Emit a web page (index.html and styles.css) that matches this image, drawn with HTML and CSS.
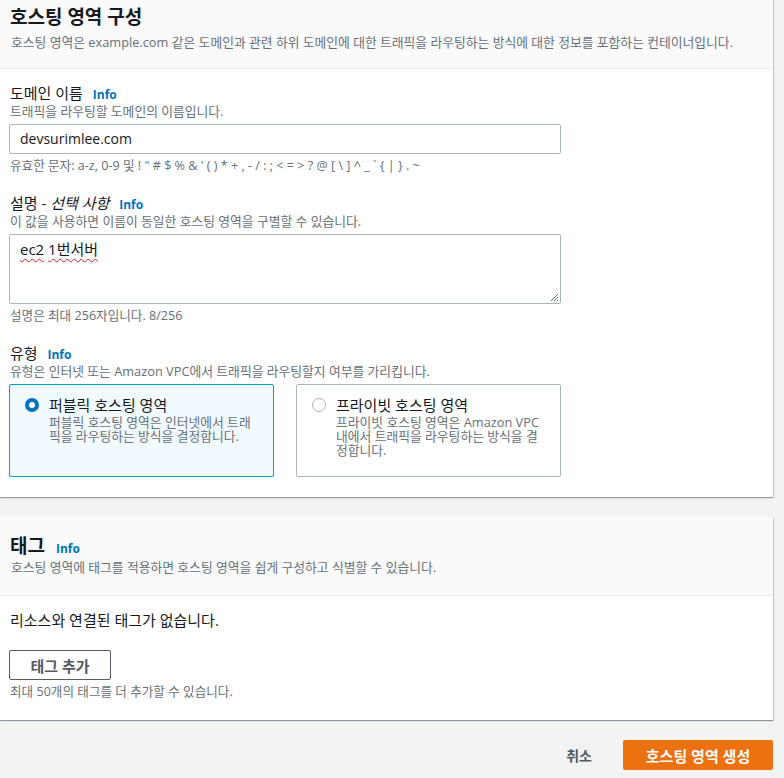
FILE: index.html
```html
<!DOCTYPE html>
<html>
<head>
<meta name="viewport" content="width=device-width, initial-scale=1">
<link rel="stylesheet" href="styles.css">
</head>
<body>
<div class="page">

<div class="card">
  <div class="card-header">
    <h2>호스팅 영역 구성</h2>
    <p class="desc">호스팅 영역은 example.com 같은 도메인과 관련 하위 도메인에 대한 트래픽을 라우팅하는 방식에 대한 정보를 포함하는 컨테이너입니다.</p>
  </div>
  <div class="card-body">
    <div class="field">
      <div class="label">도메인 이름 <a class="info">Info</a></div>
      <p class="desc">트래픽을 라우팅할 도메인의 이름입니다.</p>
      <div class="input">devsurimlee.com</div>
      <p class="hint">유효한 문자: a-z, 0-9 및 ! " # $ % &amp; ' ( ) * + , - / : ; &lt; = &gt; ? @ [ \ ] ^ _ ` { | } . ~</p>
    </div>

    <div class="field">
      <div class="label">설명 - <i>선택 사항</i> <a class="info">Info</a></div>
      <p class="desc">이 값을 사용하면 이름이 동일한 호스팅 영역을 구별할 수 있습니다.</p>
      <div class="textarea">
        <span class="typo">ec2</span> <span class="typo">1번서버</span>
        <svg class="grip" width="10" height="10" viewBox="0 0 10 10">
          <path d="M9 2 L2 9 M9 5 L5 9 M9 8 L8 9" stroke="#6b6b6b" stroke-width="1"/>
        </svg>
      </div>
      <p class="hint">설명은 최대 256자입니다. 8/256</p>
    </div>

    <div class="field">
      <div class="label">유형 <a class="info">Info</a></div>
      <p class="desc">유형은 인터넷 또는 Amazon VPC에서 트래픽을 라우팅할지 여부를 가리킵니다.</p>
      <div class="tiles">
        <div class="tile selected">
          <span class="radio on"></span>
          <div>
            <div class="tile-title">퍼블릭 호스팅 영역</div>
            <div class="tile-desc">퍼블릭 호스팅 영역은 인터넷에서 트래픽을 라우팅하는 방식을 결정합니다.</div>
          </div>
        </div>
        <div class="tile">
          <span class="radio"></span>
          <div>
            <div class="tile-title">프라이빗 호스팅 영역</div>
            <div class="tile-desc">프라이빗 호스팅 영역은 Amazon VPC 내에서 트래픽을 라우팅하는 방식을 결정합니다.</div>
          </div>
        </div>
      </div>
    </div>
  </div>
</div>

<div class="card tags">
  <div class="card-header">
    <h2>태그 <a class="info">Info</a></h2>
    <p class="desc">호스팅 영역에 태그를 적용하면 호스팅 영역을 쉽게 구성하고 식별할 수 있습니다.</p>
  </div>
  <div class="card-body">
    <p class="empty">리소스와 연결된 태그가 없습니다.</p>
    <button class="btn">태그 추가</button>
    <p class="hint">최대 50개의 태그를 더 추가할 수 있습니다.</p>
  </div>
</div>

<div class="actions">
  <button class="btn-link">취소</button>
  <button class="btn-primary">호스팅 영역 생성</button>
</div>

</div>
</body>
</html>
```

FILE: styles.css
```css
body {
  margin: 0;
  background: #f2f3f3;
  color: #16191f;
  font-family: "Open Sans", "Noto Sans CJK KR", sans-serif;
  font-size: 15px;
}

p {
  margin: 0;
}

/* page is scrolled a little, the first header is cut at the top */
.page {
  width: 773px;
  margin-top: -14px;
}

.card {
  background: #ffffff;
  box-shadow: 0 1px 1px 0 rgba(0, 28, 36, 0.3), 1px 1px 1px 0 rgba(0, 28, 36, 0.15);
  margin-bottom: 20px;
}

.card-header {
  background: #fafafa;
  border-bottom: 1px solid #eaeded;
  padding: 20px 10px 18px;
}

.card-header h2 {
  margin: 0;
  font-size: 19px;
  line-height: 22px;
  font-weight: 700;
}

.card-header .desc {
  margin-top: 6px;
}

.tags .card-header {
  padding-top: 18px;
  padding-bottom: 20px;
}

.tags .card-header .desc {
  margin-top: 2px;
}

.card-body {
  padding: 14px 10px 20px 9px;
}

.field {
  margin-bottom: 19px;
}

.field:last-child {
  margin-bottom: 0;
}

.label {
  font-size: 15px;
  line-height: 20px;
  padding-left: 1px;
}

.label i {
  font-style: italic;
}

.info {
  color: #0073bb;
  font-size: 12px;
  line-height: 1;
  font-weight: 700;
  margin-left: 6px;
}

.desc, .hint {
  color: #687078;
  font-size: 12.8px;
  line-height: 16px;
  padding-left: 1px;
}

.hint {
  font-size: 12.6px;
  margin-top: 4px;
}

.input {
  margin-top: 5px;
  width: 552px;
  height: 30px;
  box-sizing: border-box;
  border: 1px solid #aab7b8;
  border-radius: 2px;
  padding: 0 10px;
  line-height: 28px;
  font-size: 14px;
}

.textarea {
  position: relative;
  margin-top: 5px;
  width: 552px;
  height: 70px;
  box-sizing: border-box;
  border: 1px solid #aab7b8;
  border-radius: 2px;
  padding: 4px 10px;
  line-height: 20px;
}

.typo {
  text-decoration: underline wavy #e02020;
  text-decoration-thickness: 1px;
  text-underline-offset: 3px;
}

.grip {
  position: absolute;
  right: 1px;
  bottom: 1px;
}

.tiles {
  display: flex;
  gap: 22px;
  margin-top: 5px;
  width: 552px;
}

.tile {
  flex: 1;
  display: flex;
  gap: 10px;
  border: 1px solid #aab7b8;
  border-radius: 2px;
  padding: 10px 14px 19px 15px;
}

.tile.selected {
  background: #f1faff;
  border-color: #00a1c9;
}

.radio {
  flex: none;
  width: 14px;
  height: 14px;
  box-sizing: border-box;
  border: 1.5px solid #aab7b8;
  border-radius: 50%;
  margin-top: 3px;
  background: #fff;
}

.radio.on {
  border: 4px solid #0073bb;
}

.tile-title {
  font-size: 15px;
  line-height: 20px;
}

.tile-desc {
  color: #687078;
  font-size: 12.8px;
  line-height: 14px;
}

.empty {
  padding-left: 1px;
  line-height: 20px;
  margin-bottom: 20px;
}

.btn {
  display: block;
  height: 30px;
  width: 102px;
  background: #fff;
  border: 1px solid #545b64;
  border-radius: 2px;
  color: #545b64;
  font-family: inherit;
  font-size: 15px;
  font-weight: 700;
  padding: 0;
}

.actions {
  display: flex;
  justify-content: flex-end;
  align-items: center;
  gap: 11px;
}

.btn-link, .btn-primary {
  height: 30px;
  border: none;
  font-family: inherit;
  font-size: 15px;
  font-weight: 700;
  padding: 0 20px;
}

.btn-link {
  background: none;
  color: #545b64;
  font-size: 14px;
}

.btn-primary {
  width: 150px;
  background: #ec7211;
  color: #fff;
  border-radius: 2px;
}
```
